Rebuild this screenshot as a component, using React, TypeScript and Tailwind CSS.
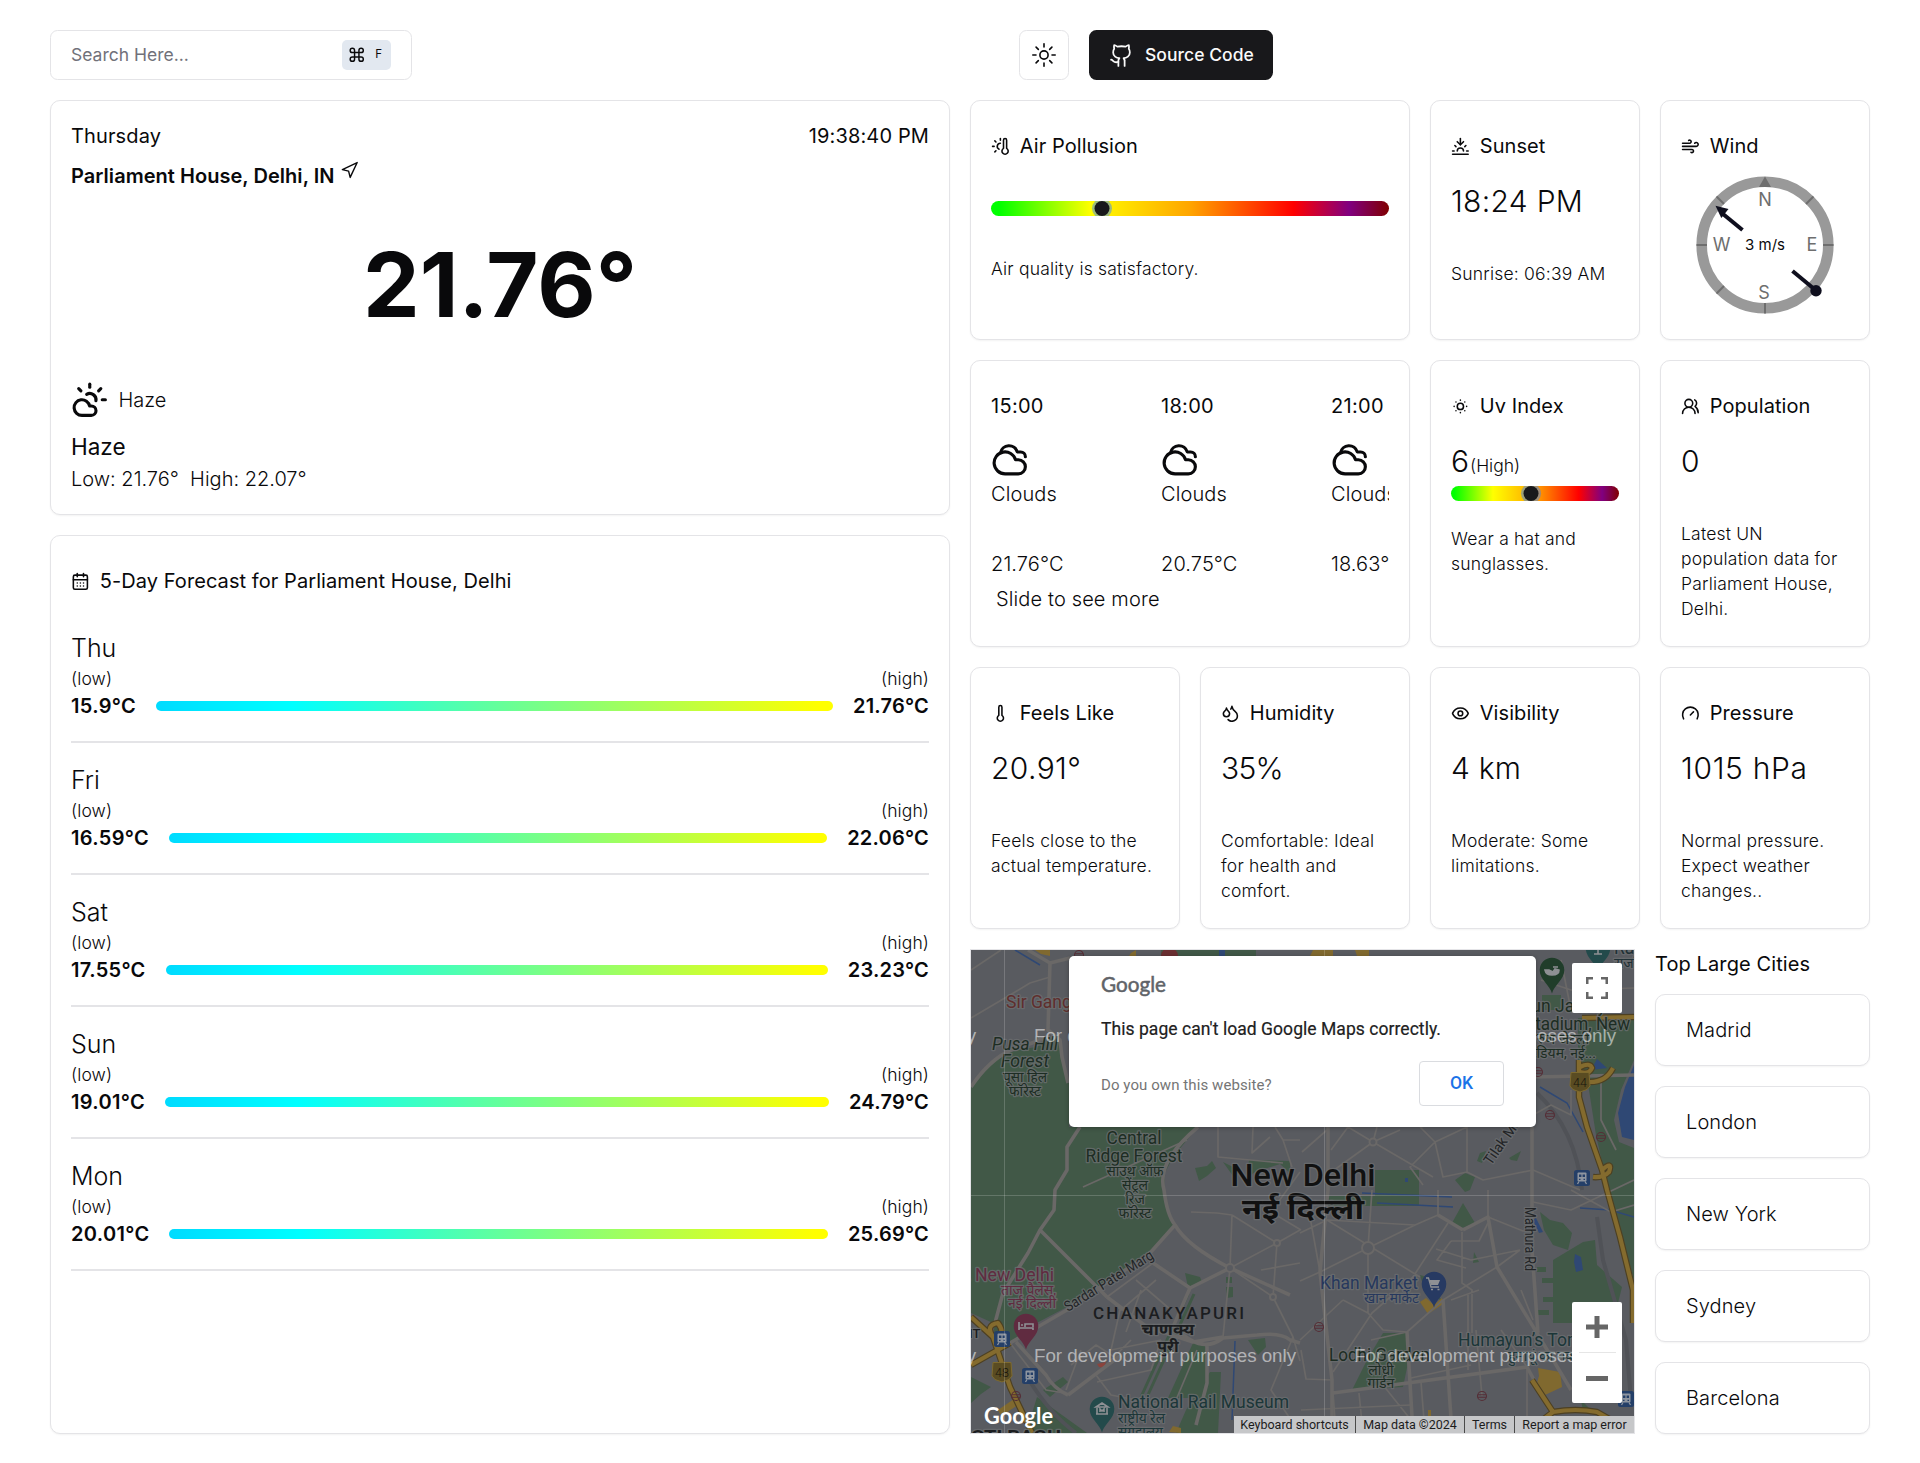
import type { ReactNode } from "react";
import {
  CalendarDays,
  CloudSun,
  Cloudy,
  Command,
  Droplets,
  Eye,
  Gauge,
  Github,
  Navigation,
  SunDim,
  Sunset,
  Thermometer,
  ThermometerSun,
  UsersRound,
  Wind,
} from "lucide-react";

const CARD = "rounded-[10px] border border-[#e4e4e7] bg-white shadow-[0_1px_2px_rgba(0,0,0,0.05)]";
const NOTE = "text-[17.5px] leading-[25px] tracking-[0.2px]";

type IconType = typeof Wind;

function CardTitle({ icon: Icon, children }: { icon: IconType; children: ReactNode }) {
  return (
    <div className="flex h-[30px] items-center gap-[10px] text-[20px] font-normal tracking-[0.07px]">
      <Icon size={18.75} className="shrink-0" />
      <span className="whitespace-nowrap">{children}</span>
    </div>
  );
}

interface StatProps {
  icon: IconType;
  title: string;
  value: string;
  text: string;
  tracking?: string;
}

function StatCard({ icon, title, value, text, tracking = "" }: StatProps) {
  return (
    <div className={`${CARD} flex flex-col px-5 pt-[30px]`}>
      <CardTitle icon={icon}>{title}</CardTitle>
      <p className={`mt-5 text-[30px] leading-[40px] ${tracking}`}>{value}</p>
      <p className={`mt-10 ${NOTE}`}>{text}</p>
    </div>
  );
}

function Scale({ percent }: { percent: number }) {
  return (
    <div className="relative h-[15px] w-full overflow-hidden rounded-full bg-[linear-gradient(to_right,#00ff00_2%,#ffff00_25%,#ffa500_50%,#ff0000_76%,#800080_90%,#800000_100%)]">
      <span
        className="absolute top-0 size-[15px] -translate-x-1/2 rounded-full bg-[#18181b] shadow-[0_0_0_2.5px_rgba(59,130,246,0.5)]"
        style={{ left: `${percent}%` }}
      />
    </div>
  );
}

function Compass() {
  return (
    <svg width="140" height="140" viewBox="-70 -70 140 140" className="mx-auto mt-[-1px] block">
      <circle r="63.3" fill="none" stroke="#999999" strokeWidth="10.6" />
      <g stroke="#6e6e6e" strokeWidth="2">
        {[45, 90, 180, 225, 270, 315].map((a) => (
          <line key={a} y1="-68.5" y2="-58" transform={`rotate(${a})`} />
        ))}
      </g>
      <path d="M0-68.5L6-58H-6Z" fill="#6e6e6e" />
      <g fill="#6e6e6e" fontFamily="Inter" fontSize="18" fontWeight="400" textAnchor="middle">
        <text x="0" y="-39">N</text>
        <text x="-1" y="54">S</text>
        <text x="-43.5" y="6.3">W</text>
        <text x="47" y="6.3">E</text>
      </g>
      <text y="5.4" textAnchor="middle" fontFamily="Inter" fontSize="15" fontWeight="400" fill="#09090b">3 m/s</text>
      <g stroke="#0f0f1e" strokeWidth="4" fill="#0f0f1e">
        <path d="M-22.500-15L-42-31" />
        <path d="M27.500 26L51 45.500" />
        <circle cx="51" cy="45.700" r="5.700" stroke="none" />
        <path d="M-49.500-39.200L-36.500-36L-43.700-27Z" stroke="none" />
      </g>
    </svg>
  );
}

const DAYS = [
  { day: "Thu", low: "15.9°C", high: "21.76°C" },
  { day: "Fri", low: "16.59°C", high: "22.06°C" },
  { day: "Sat", low: "17.55°C", high: "23.23°C" },
  { day: "Sun", low: "19.01°C", high: "24.79°C" },
  { day: "Mon", low: "20.01°C", high: "25.69°C" },
];

const HOURS = [
  { time: "15:00", temp: "21.76°C" },
  { time: "18:00", temp: "20.75°C" },
  { time: "21:00", temp: "18.63°C" },
];

const PARKS = [
  "M0 137C10 122 18 112 26 107C40 100 60 98 66 97L76 87L89 90L91 107L98 133L98 177H227L216 190L202 207L194 223L193 240L197 260L204 275L179 303L96 357L60 376L39 393L22 373L0 363Z",
  "M190 0H285V6H190ZM224 218L236 216L241 211L245 218L236 226L228 231ZM252 212L264 218L262 226ZM278 210L319 211V223L309 214L284 222L276 228Z",
  "M404 220H448V256H356V246H404ZM484 230L494 223L504 227L499 240L494 242ZM492 253L504 273L491 278L481 273Z",
  "M509 203L515 201L511 213L506 211ZM538 208L550 201L546 211L540 210Z",
  "M214 323L229 327L231 332L217 337ZM255 327H261V333H255ZM255 337H262V347L256 348Z",
  "M222 393L237 397L236 433L229 448H197ZM239 422H250L247 483H205L215 460ZM277 390L294 388L295 397L287 405Z",
  "M72 440L92 427L97 432L79 447ZM0 427L20 437L10 444L0 453ZM66 447L116 483H55ZM24 371L42 374V388H22Z",
  "M412 383L436 383L437 413L432 437L381 440L396 410Z",
  "M612 292L624 290L626 315L651 337L642 373L640 410L601 440V373H582V310Z",
  "M569 262L579 270L592 273L601 283L597 300L582 295L573 280ZM571 328H583V333H571ZM572 347H582V352H572ZM566 360H578V365H566ZM566 317H575V322H566ZM503 302L508 312L502 313Z",
  "M607 68L663 66V110L650 140L643 170L648 192L663 198V330L650 285L636 235L625 185L618 140L607 110ZM571 45H590V60H571ZM449 325L460 328L470 350L455 345ZM610 450L620 460L612 461Z",
];

const MAIN_ROADS =
  "M109 177L96 197L96 220L84 240L83 260L69 280L57 303L32 343L24 373M69 280L136 347M39 393L96 360L179 303L204 275M79 13L77 80L89 90L91 107L97 133M79 13L57 0M79 13L99 8M0 137Q18 110 40 100Q60 94 76 87M227 177Q185 212 193 240Q196 265 204 275Q216 296 259 318L319 345M97 445Q82 438 75 425L45 392M97 445L150 405M204 377Q230 405 252 388L286 385Q310 382 319 390L329 393M259 318L219 338L182 313M219 338L202 377M236 395V433L225 475M562 127L663 125M561 177V300L567 383M436 382L442 483M472 350L481 483M362 443L556 417L592 483M357 177V240L349 322L361 430V483M492 280L517 267L526 317L575 398L600 440M467 265L492 280M136 347L176 377L222 392L252 387";

const MINOR_ROADS =
  "M0 68L39 45L59 33L79 27M112 237L216 190M247 177V207L312 213M282 177L281 203L299 187M304 177L312 190H329M312 190L321 217M331 202L356 180M377 177L402 192L462 227M406 177L402 192L359 223M402 192L429 180M449 177L464 192L496 177M464 192L472 227L496 222L512 230L562 220L609 240M464 192L439 217L452 235M496 177V222M329 283L356 270L444 275M356 270L449 327M467 265L444 275L399 297L349 322L329 331M335 245L349 322M401 240L397 298V363M467 240V265M517 240V267L552 281H561M477 273L442 327L401 363L362 422M526 317L472 350L436 382L412 380L397 363L372 350M549 300L526 317M480 291H508L517 273M465 299L500 310L549 300M491 282V333L501 340V383M480 291L466 310L495 318M497 345V420M508 340L480 350M362 443L365 483M412 435L440 470M440 428L500 415M505 380L511 446M556 417V483M361 430L335 429L330 400M388 443L392 483M450 432L454 483M372 350L329 390M330 460L440 455M261 265L259 318L252 387M259 318L306 293L329 280M261 265L306 293L302 347L259 318M302 347L322 387L329 411M246 263L220 262M182 313L136 347L150 360L185 330M165 330L200 360M149 360L140 400L190 390M170 340L155 382M160 390L125 425M190 390L180 420L126 432M125 425L140 445L190 455M39 393L75 440L93 443M110 400L95 440M148 410L125 395L100 415M329 313L290 320M322 387L300 440L320 470M226 400L205 450M246 263L261 265M329 222L300 262L330 280M600 240L640 262L663 255M562 252L600 260L663 230M600 140L600 165L580 155L562 165M570 30L600 40L663 38M450 177L480 170M550 340L562 370M590 10L600 60M400 390L436 382M530 380L556 417M377 177L360 200M0 20L30 0M630 125V170L645 200";

const HIGHWAYS =
  "M663 67L611 68M608 110V147L616 177L631 220L636 240L649 287L662 340V373M0 367L22 387L39 437L61 483M0 415L39 393M22 387Q14 375 27 373Q36 385 24 398M561 430L582 462Q605 458 626 462L663 483M582 462L565 475M619 132Q635 132 642 118M609 117Q619 112 621 118Q618 125 609 122M631 220Q642 210 638 222Q632 228 622 227";

const METRO: [number, number][] = [
  [567, 122],
  [579, 165],
  [630, 187],
  [348, 377],
  [511, 446],
  [45, 446],
  [108, 5],
];

const FONT_HI = "Roboto, 'Noto Sans', sans-serif";

interface LabelProps {
  x: number;
  y: number;
  size?: number;
  fill?: string;
  anchor?: "start" | "middle" | "end";
  weight?: number;
  length?: number;
  italic?: boolean;
  rotate?: number;
  children: string;
}

function Label({ x, y, size = 17, fill = "#1d2d23", anchor = "middle", weight = 400, length, italic, rotate, children }: LabelProps) {
  return (
    <text
      x={x}
      y={y}
      fontSize={size}
      fill={fill}
      textAnchor={anchor}
      fontWeight={weight}
      fontStyle={italic ? "italic" : "normal"}
      textLength={length}
      lengthAdjust="spacingAndGlyphs"
      transform={rotate ? `rotate(${rotate} ${x} ${y})` : undefined}
      stroke="#6b6e70"
      strokeOpacity="0.8"
      strokeWidth="2.5"
      strokeLinejoin="round"
      style={{ paintOrder: "stroke" }}
    >
      {children}
    </text>
  );
}

function Pin({ x, y, fill, children }: { x: number; y: number; fill: string; children?: ReactNode }) {
  return (
    <g transform={`translate(${x} ${y})`}>
      <path d="M0 23.500C-2 15-12.300 10-12.300 0A12.300 12.300 0 0 1 12.300 0C12.300 10 2 15 0 23.500Z" fill={fill} />
      <g fill="none" stroke="#8e9094" strokeWidth="1.600">{children}</g>
    </g>
  );
}

function Train({ x, y }: { x: number; y: number }) {
  return (
    <g transform={`translate(${x} ${y})`}>
      <rect x="-8" y="-8" width="16" height="16" rx="2.500" fill="#243f68" />
      <rect x="-4.500" y="-5.500" width="9" height="9" rx="1" fill="#8e959f" />
      <path d="M-3-3.500H-.6V-1H-3ZM.6-3.500H3V-1H.6ZM-3 .8H-1.500V2H-3ZM1.500 .8H3V2H1.500Z" fill="#243f68" />
      <path d="M-3 3.500L-4.500 6M3 3.500L4.500 6" fill="none" stroke="#8e959f" strokeWidth="1.300" />
    </g>
  );
}

function Shield({ x, y, n }: { x: number; y: number; n: string }) {
  return (
    <g transform={`translate(${x} ${y})`}>
      <path d="M-9-9.500H9L10 4L7 7.500L0 10L-7 7.500L-10 4Z" fill="#5a4c22" stroke="#7e6a2e" />
      <text y="4.500" fontSize="12.500" textAnchor="middle" fill="#17150d">{n}</text>
    </g>
  );
}

function MapArt() {
  return (
    <svg width="663" height="483" viewBox="0 0 663 483" className="block" fontFamily={FONT_HI}>
      <rect width="663" height="483" fill="#595b60" />
      <g fill="#415847">
        {PARKS.map((d) => (
          <path key={d} d={d} />
        ))}
      </g>
      <path d="M217 344L170 447M223 344L176 447" stroke="#415847" strokeWidth="3" />
      <path
        d="M663 115L654 137L647 163L651 187L663 190ZM604 304L610 307L612 320L605 322L603 312ZM620 120L626 109L636 118ZM248 0H254V6H248ZM434 228H437V232H434ZM562 270L568 283L572 282L565 268Z"
        fill="#2f4874"
      />
      <path
        d="M44 0L69 15M391 243L481 247M406 253L482 257M569 137L596 153L612 182M609 258L639 260L663 267M264 391L261 470"
        fill="none"
        stroke="#2f4874"
        strokeWidth="1.500"
      />
      <path d="M626 267L632 310L655 390L660 450M566 143Q605 180 611 240M58 430Q80 465 105 483" fill="none" stroke="#505257" strokeWidth="4" />
      <path
        d="M567 418L589 422L591 437L574 445L566 433L568 426ZM449 352L455 348L463 355L471 348L472 354L457 364ZM64 0H79V6L70 4ZM342 0H362V6H339ZM384 0H398V6H386ZM160 3L165 0V6H158ZM27 460L43 449L47 455L30 466ZM198 482L202 476L210 478V483ZM457 460H460V472H457Z"
        fill="#80692f"
      />
      <path d="M126 414L135 412L133 418L128 417Z" fill="#8a443d" />
      <g fill="none" stroke="#6a6867" strokeLinejoin="round">
        <path d={MINOR_ROADS} strokeWidth="1.700" />
        <path d={MAIN_ROADS} strokeWidth="3.600" />
        <g strokeWidth="2" fill="#595b60">
          <circle cx="397" cy="298" r="6" />
          <circle cx="259" cy="318" r="4" />
          <circle cx="306" cy="293" r="3" />
          <circle cx="302" cy="347" r="3" />
          <circle cx="402" cy="192" r="3.500" />
        </g>
      </g>
      <g fill="none" strokeLinejoin="round">
        <path d={HIGHWAYS} stroke="#4d4022" strokeWidth="6.500" />
        <path d={HIGHWAYS} stroke="#846b2e" strokeWidth="4.200" />
      </g>
      <g fill="none" stroke="#552e36" strokeWidth="1.100">
        {METRO.map(([x, y]) => (
          <path key={x} d={`M${x - 4.5} ${y}a4.500 4.500 0 1 0 9 0a4.500 4.500 0 1 0 -9 0M${x - 4} ${y - 1.2}h8M${x - 4} ${y + 1.2}h8`} />
        ))}
      </g>
      <path d="M190 6A8 8 0 0 1 207 6Z" fill="#6a2f31" />

      <Label x={35} y={58} anchor="start" size={17.5} fill="#5f2e2c">Sir Ganga R</Label>
      <Label x={54} y={100} size={17.5} italic length={66}>Pusa Hill</Label>
      <Label x={54} y={117} size={17.5} italic length={48}>Forest</Label>
      <Label x={54} y={132} size={14} length={44}>पूसा हिल</Label>
      <Label x={54} y={146} size={14} length={32}>फॉरेस्ट</Label>
      <Label x={163} y={194} size={17.5} length={55}>Central</Label>
      <Label x={163} y={212} size={17.5} length={97}>Ridge Forest</Label>
      <Label x={164} y={226} size={14} length={57}>साउथ ऑफ़</Label>
      <Label x={164} y={240} size={14}>सेंट्रल</Label>
      <Label x={164} y={254} size={14}>रिज</Label>
      <Label x={164} y={268} size={14} length={33}>फॉरेस्ट</Label>
      <Label x={332} y={236} size={31} weight={500} fill="#111111" length={145}>New Delhi</Label>
      <Label x={332} y={269} size={29} weight={700} fill="#111111" length={122}>नई दिल्ली</Label>
      <Label x={520} y={216} size={14.5} anchor="start" fill="#222426" rotate={-55} length={58}>Tilak Mar</Label>
      <Label x={97} y={362} size={14.5} anchor="start" fill="#222426" rotate={-32} length={102}>Sardar Patel Marg</Label>
      <Label x={554} y={257} size={14.5} anchor="start" fill="#222426" rotate={90} length={64}>Mathura Rd</Label>
      <Label x={-4} y={331} size={17.5} anchor="start" fill="#602b40" length={87}>, New Delhi</Label>
      <Label x={85} y={345} size={14} anchor="end" fill="#602b40" length={55}>ताज पैलेस,</Label>
      <Label x={85} y={358} size={14} anchor="end" fill="#602b40" length={48}>नई दिल्ली</Label>
      <text x="122" y="369" fontSize="17" fontWeight="500" fill="#1b1d20" textLength="151">CHANAKYAPURI</text>
      <Label x={197} y={385} size={16} weight={700} fill="#1b1d20" length={53}>चाणक्य</Label>
      <Label x={197} y={402} size={16} weight={700} fill="#1b1d20">पुरी</Label>
      <Label x={147} y={458} size={17.5} anchor="start" fill="#1b3638" length={171}>National Rail Museum</Label>
      <Label x={147} y={473} size={14} anchor="start" fill="#1b3638" length={47}>राष्ट्रीय रेल</Label>
      <Label x={147} y={487} size={14} anchor="start" fill="#1b3638" length={45}>संग्रहालय</Label>
      <Label x={349} y={339} size={17.5} anchor="start" fill="#26385d" length={98}>Khan Market</Label>
      <Label x={448} y={353} size={14} anchor="end" fill="#26385d" length={55}>खान मार्केट</Label>
      <Label x={358} y={411} size={17.5} anchor="start" length={101}>Lodhi Garden</Label>
      <Label x={410} y={425} size={14}>लोधी</Label>
      <Label x={410} y={438} size={14}>गार्डन</Label>
      <Label x={487} y={396} size={17.5} anchor="start" fill="#1b3638">Humayun’s Tomb</Label>
      <Label x={537} y={411} size={14} anchor="start" fill="#1b3638">हुमायूं का मकबरा</Label>
      <Label x={543} y={62} size={17.5} anchor="start">Arun Jaitley</Label>
      <Label x={554} y={80} size={17.5} anchor="start" length={105}>Stadium, New</Label>
      <Label x={555} y={94} size={14} anchor="start">अरुण जेटली</Label>
      <Label x={553} y={108} size={14} anchor="start" length={72}>स्टेडियम, नई...</Label>
      <Label x={643} y={4} size={17.5} anchor="start" fill="#1f3035">Raj</Label>
      <Label x={643} y={18} size={14} anchor="start" fill="#1f3035">राज</Label>
      <Label x={-2} y={388} size={13} anchor="start" weight={500} fill="#1b1d20">IT</Label>
      <Label x={0} y={492} size={17} anchor="start" weight={700} fill="#1b1d20" length={90}>OTI BAGH</Label>

      <Pin x={55} y={376} fill="#602b40">
        <path d="M-7-4V4M-7 2H7V4M7 1V-2H-1V1M-5-1H-3" />
      </Pin>
      <Pin x={131} y={459} fill="#234a4b">
        <path d="M-6-2L0-6L6-2ZM-5-1V5M5-1V5M-6 5H6M-2 3V0L0 2L2 0V3" />
      </Pin>
      <Pin x={463} y={334} fill="#273a62">
        <path d="M-5-4H6L4 1H-3Z" fill="#8e9094" stroke="none" />
        <path d="M-8-6H-5.500L-3 3H5" strokeWidth="1.300" />
        <path d="M-3 5.500H-1M3.500 5.500H5.500" />
      </Pin>
      <Pin x={581} y={20} fill="#203d2a">
        <path d="M-7 0Q-6 5 0 5Q7 5 7 0L3-1L1 2L-3 0ZM1-3H6" fill="#8e9094" />
      </Pin>
      <Pin x={627} y={-2} fill="#234a4b">
        <path d="M0-5V6M-4 6H4" />
      </Pin>
      <Train x={31} y={389} />
      <Train x={59} y={426} />
      <Train x={611} y={228} />
      <Train x={655} y={449} />
      <Shield x={31} y={422} n="48" />
      <Shield x={609} y={132} n="44" />

      <path d="M33.500 0V483M353.500 0V483M0 245.500H663" stroke="#ffffff" strokeOpacity="0.18" />
      <g fill="#ffffff" fillOpacity="0.55" fontFamily="'Liberation Sans', Arial, sans-serif" fontSize="18.75">
        {[92, 412].map((y) =>
          [-257, 63, 383].map((x) => (
            <text key={`${x}-${y}`} x={x} y={y} textLength="262">
              For development purposes only
            </text>
          )),
        )}
      </g>
      <text x="13" y="474" fontFamily="Lato, sans-serif" fontSize="22.500" fontWeight="700" fill="#ffffff" textLength="69" lengthAdjust="spacingAndGlyphs">
        Google
      </text>
    </svg>
  );
}

function MapPanel() {
  return (
    <div className="relative h-[485px] w-[665px] overflow-hidden border border-[#e4e4e7]">
      <MapArt />
      <div className="absolute left-[98px] top-[6px] h-[171px] w-[467px] rounded-[5px] bg-white pl-8 pr-8 pt-[14px] font-[Roboto] shadow-[0_1px_4px_rgba(0,0,0,0.3)]">
        <svg width="66" height="30" className="block">
          <text
            x="0"
            y="21.500"
            fontFamily="Lato, sans-serif"
            fontSize="20.500"
            fontWeight="400"
            fill="#5f6368"
            stroke="#5f6368"
            strokeWidth="0.500"
            textLength="65"
            lengthAdjust="spacingAndGlyphs"
          >
            Google
          </text>
        </svg>
        <p className="mt-[17px] text-[17.5px] font-normal leading-[25px] tracking-[0.05px] text-[#212121] [-webkit-text-stroke:0.2px_#212121]">
          This page can't load Google Maps correctly.
        </p>
        <div className="mt-[19px] flex items-center justify-between">
          <span className="pt-[3px] text-[15px] font-normal tracking-[0.08px] text-[#757575]">Do you own this website?</span>
          <span className="flex h-[45px] w-[85px] items-center justify-center rounded-[4px] border border-[#dadce0] text-[17.5px] font-medium text-[#1a73e8]">
            OK
          </span>
        </div>
      </div>
      <div className="absolute left-[601px] top-[13px] flex size-[50px] items-center justify-center rounded-[2px] bg-white">
        <svg width="22" height="22" viewBox="0 0 22 22" fill="none" stroke="#666666" strokeWidth="2.500">
          <path d="M1.250 7V1.250H7M15 1.250H20.750V7M20.750 15V20.750H15M7 20.750H1.250V15" />
        </svg>
      </div>
      <div className="absolute left-[601px] top-[352px] flex h-[101px] w-[50px] flex-col items-center rounded-[2px] bg-white">
        <svg width="22" height="50" viewBox="0 0 22 50" fill="#666666">
          <path d="M0 22.500H8.500V14H13.500V22.500H22V27.500H13.500V36H8.500V27.500H0Z" />
        </svg>
        <div className="h-px w-[37px] bg-[#e6e6e6]" />
        <svg width="22" height="50" viewBox="0 0 22 50" fill="#666666">
          <path d="M0 23H22V28H0Z" />
        </svg>
      </div>
      <div className="absolute bottom-0 right-0 flex h-[17px] divide-x divide-[#4a4a4a] bg-[#c6c7c9] font-[Roboto] text-[12.5px] font-normal leading-[17px] text-[#1c1c1c]">
        <span className="w-[122px] whitespace-nowrap text-center">Keyboard shortcuts</span>
        <span className="w-[109px] whitespace-nowrap text-center">Map data ©2024</span>
        <span className="w-[50px] whitespace-nowrap text-center">Terms</span>
        <span className="w-[119px] whitespace-nowrap text-center">Report a map error</span>
      </div>
    </div>
  );
}

export default function App() {
  return (
    <div className="h-[1463px] w-[1920px] bg-white px-[50px] pt-[30px] font-[Inter,sans-serif] font-light text-[#09090b]">
      <header className="flex h-[50px] justify-between">
        <div className="flex w-[362px] items-center justify-between rounded-[7.5px] border border-[#e4e4e7] pl-5 pr-5 text-[17.5px] font-normal text-[#71717a]">
          <span className="pt-px">Search Here...</span>
          <kbd className="flex h-[30px] w-[49px] items-center justify-between rounded-[5px] bg-[#e2e8f0] pl-[6px] pr-[9px] font-[Inter] text-[#09090b]">
            <Command size={17.5} />
            <span className="text-[11.5px] leading-none">F</span>
          </kbd>
        </div>
        <div className="mr-[597px] flex gap-5">
          <div className="flex size-[50px] items-center justify-center rounded-[7.5px] border border-[#e4e4e7]">
            <svg width="24" height="24" viewBox="0 0 15 15" fill="none" stroke="#09090b" strokeWidth="1" strokeLinecap="round">
              <circle cx="7.500" cy="7.500" r="2.560" />
              <path d="M7.500 .5V2.500M7.500 12.500V14.500M.5 7.500H2.500M12.500 7.500H14.500M2.550 2.550L3.960 3.960M11.040 11.040L12.450 12.450M2.550 12.450L3.960 11.040M11.040 3.960L12.450 2.550" />
            </svg>
          </div>
          <div className="flex h-[50px] w-[184px] items-center gap-[11px] whitespace-nowrap rounded-[7.5px] bg-[#18181b] pl-5 text-[17.5px] font-medium text-[#fafafa]">
            <Github size={25} strokeWidth={1.7} />
            <span className="pt-px tracking-[0.05px]">Source Code</span>
          </div>
        </div>
      </header>

      <main className="mt-5 flex gap-5">
        <section className="flex w-[900px] flex-col gap-5">
          <div className={`${CARD} flex h-[415px] flex-col px-5 pt-5`}>
            <div className="flex justify-between text-[20px] font-normal leading-[30px] tracking-[0.13px]">
              <span>Thursday</span>
              <span>19:38:40 PM</span>
            </div>
            <div className="mt-[10px] flex h-[30px] text-[20px] font-semibold leading-[30px] tracking-[0.04px]">
              <span>Parliament House, Delhi, IN</span>
              <Navigation size={18.75} strokeWidth={1.8} className="ml-[5px]" />
            </div>
            <p className="mt-[49px] text-center text-[90px] font-bold leading-[90px]">21.76°</p>
            <div className="mt-[51px] flex h-[38px] items-center gap-[10px] text-[20px]">
              <CloudSun size={37.5} />
              <span>Haze</span>
            </div>
            <p className="mt-[10px] text-[22.5px] font-normal leading-[35px]">Haze</p>
            <p className="whitespace-pre text-[20px] leading-[30px]">{"Low: 21.76°  High: 22.07°"}</p>
          </div>

          <div className={`${CARD} h-[899px] px-5 pt-[30px]`}>
            <CardTitle icon={CalendarDays}>5-Day Forecast for Parliament House, Delhi</CardTitle>
            <div className="mt-[35px] flex flex-col gap-5">
              {DAYS.map((d) => (
                <div key={d.day} className="h-[112px] border-b-2 border-[#e4e4e7]">
                  <p className="text-[25px] leading-[35px]">{d.day}</p>
                  <div className="flex justify-between text-[17.5px] leading-[25px] tracking-[0.1px]">
                    <span>(low)</span>
                    <span>(high)</span>
                  </div>
                  <div className="flex h-[30px] items-center gap-5 text-[20px] font-semibold">
                    <span className="tracking-[0.33px]">{d.low}</span>
                    <span className="h-[10px] flex-1 rounded-full bg-[linear-gradient(to_right,#00dbff_0%,#00ffff_20%,#ffff00_98%)]" />
                    <span className="tracking-[0.22px]">{d.high}</span>
                  </div>
                </div>
              ))}
            </div>
          </div>
        </section>

        <section className="flex w-[900px] flex-col gap-5">
          <div className="grid h-[240px] grid-cols-4 gap-5">
            <div className={`${CARD} col-span-2 px-5 pt-[30px]`}>
              <CardTitle icon={ThermometerSun}>Air Pollusion</CardTitle>
              <div className="mt-10">
                <Scale percent={27.8} />
              </div>
              <p className={`mt-10 ${NOTE}`}>Air quality is satisfactory.</p>
            </div>
            <StatCard icon={Sunset} title="Sunset" value="18:24 PM" tracking="tracking-[0.3px]" text="Sunrise: 06:39 AM" />
            <div className={`${CARD} px-5 pt-[30px]`}>
              <CardTitle icon={Wind}>Wind</CardTitle>
              <div className="mt-[15px]">
                <Compass />
              </div>
            </div>
          </div>

          <div className="grid h-[287px] grid-cols-4 gap-5">
            <div className={`${CARD} col-span-2 px-5 pt-[30px]`}>
              <div className="flex overflow-hidden">
                {HOURS.map((h) => (
                  <div key={h.time} className="flex w-[170px] shrink-0 flex-col text-[20px] leading-[30px] tracking-[0.1px]">
                    <span className="font-normal tracking-[0.3px]">{h.time}</span>
                    <Cloudy size={37.5} className="mt-5" />
                    <span>Clouds</span>
                    <span className="mt-10">{h.temp}</span>
                  </div>
                ))}
              </div>
              <p className="ml-[5px] mt-[5px] text-[20px] leading-[30px] tracking-[0.13px]">Slide to see more</p>
            </div>
            <div className={`${CARD} px-5 pt-[30px]`}>
              <CardTitle icon={SunDim}>Uv Index</CardTitle>
              <div className="mt-5 flex h-[40px] items-baseline text-[30px] leading-[40px]">
                <span>6</span>
                <span className="ml-px text-[17.5px] leading-[25px]">(High)</span>
              </div>
              <div className="mt-[5px]">
                <Scale percent={47.5} />
              </div>
              <p className={`mt-[25px] ${NOTE}`}>Wear a hat and sunglasses.</p>
            </div>
            <StatCard icon={UsersRound} title="Population" value="0" text="Latest UN population data for Parliament House, Delhi." />
          </div>

          <div className="grid h-[262px] grid-cols-4 gap-5">
            <StatCard icon={Thermometer} title="Feels Like" value="20.91°" tracking="tracking-[0.4px]" text="Feels close to the actual temperature." />
            <StatCard icon={Droplets} title="Humidity" value="35%" tracking="tracking-[-0.7px]" text="Comfortable: Ideal for health and comfort." />
            <StatCard icon={Eye} title="Visibility" value="4 km" tracking="tracking-[0.2px]" text="Moderate: Some limitations." />
            <StatCard icon={Gauge} title="Pressure" value="1015 hPa" tracking="tracking-[0.65px]" text="Normal pressure. Expect weather changes.." />
          </div>

          <div className="flex gap-5">
            <MapPanel />
            <div className="flex w-[215px] flex-col">
              <h3 className="text-[20px] font-normal leading-[30px] tracking-[0.1px]">Top Large Cities</h3>
              <div className="mt-[15px] flex flex-col gap-5">
                {["Madrid", "London", "New York", "Sydney", "Barcelona"].map((c) => (
                  <div key={c} className={`${CARD} flex h-[72px] items-center px-[30px] text-[20px] tracking-[0.1px]`}>
                    {c}
                  </div>
                ))}
              </div>
            </div>
          </div>
        </section>
      </main>
    </div>
  );
}
